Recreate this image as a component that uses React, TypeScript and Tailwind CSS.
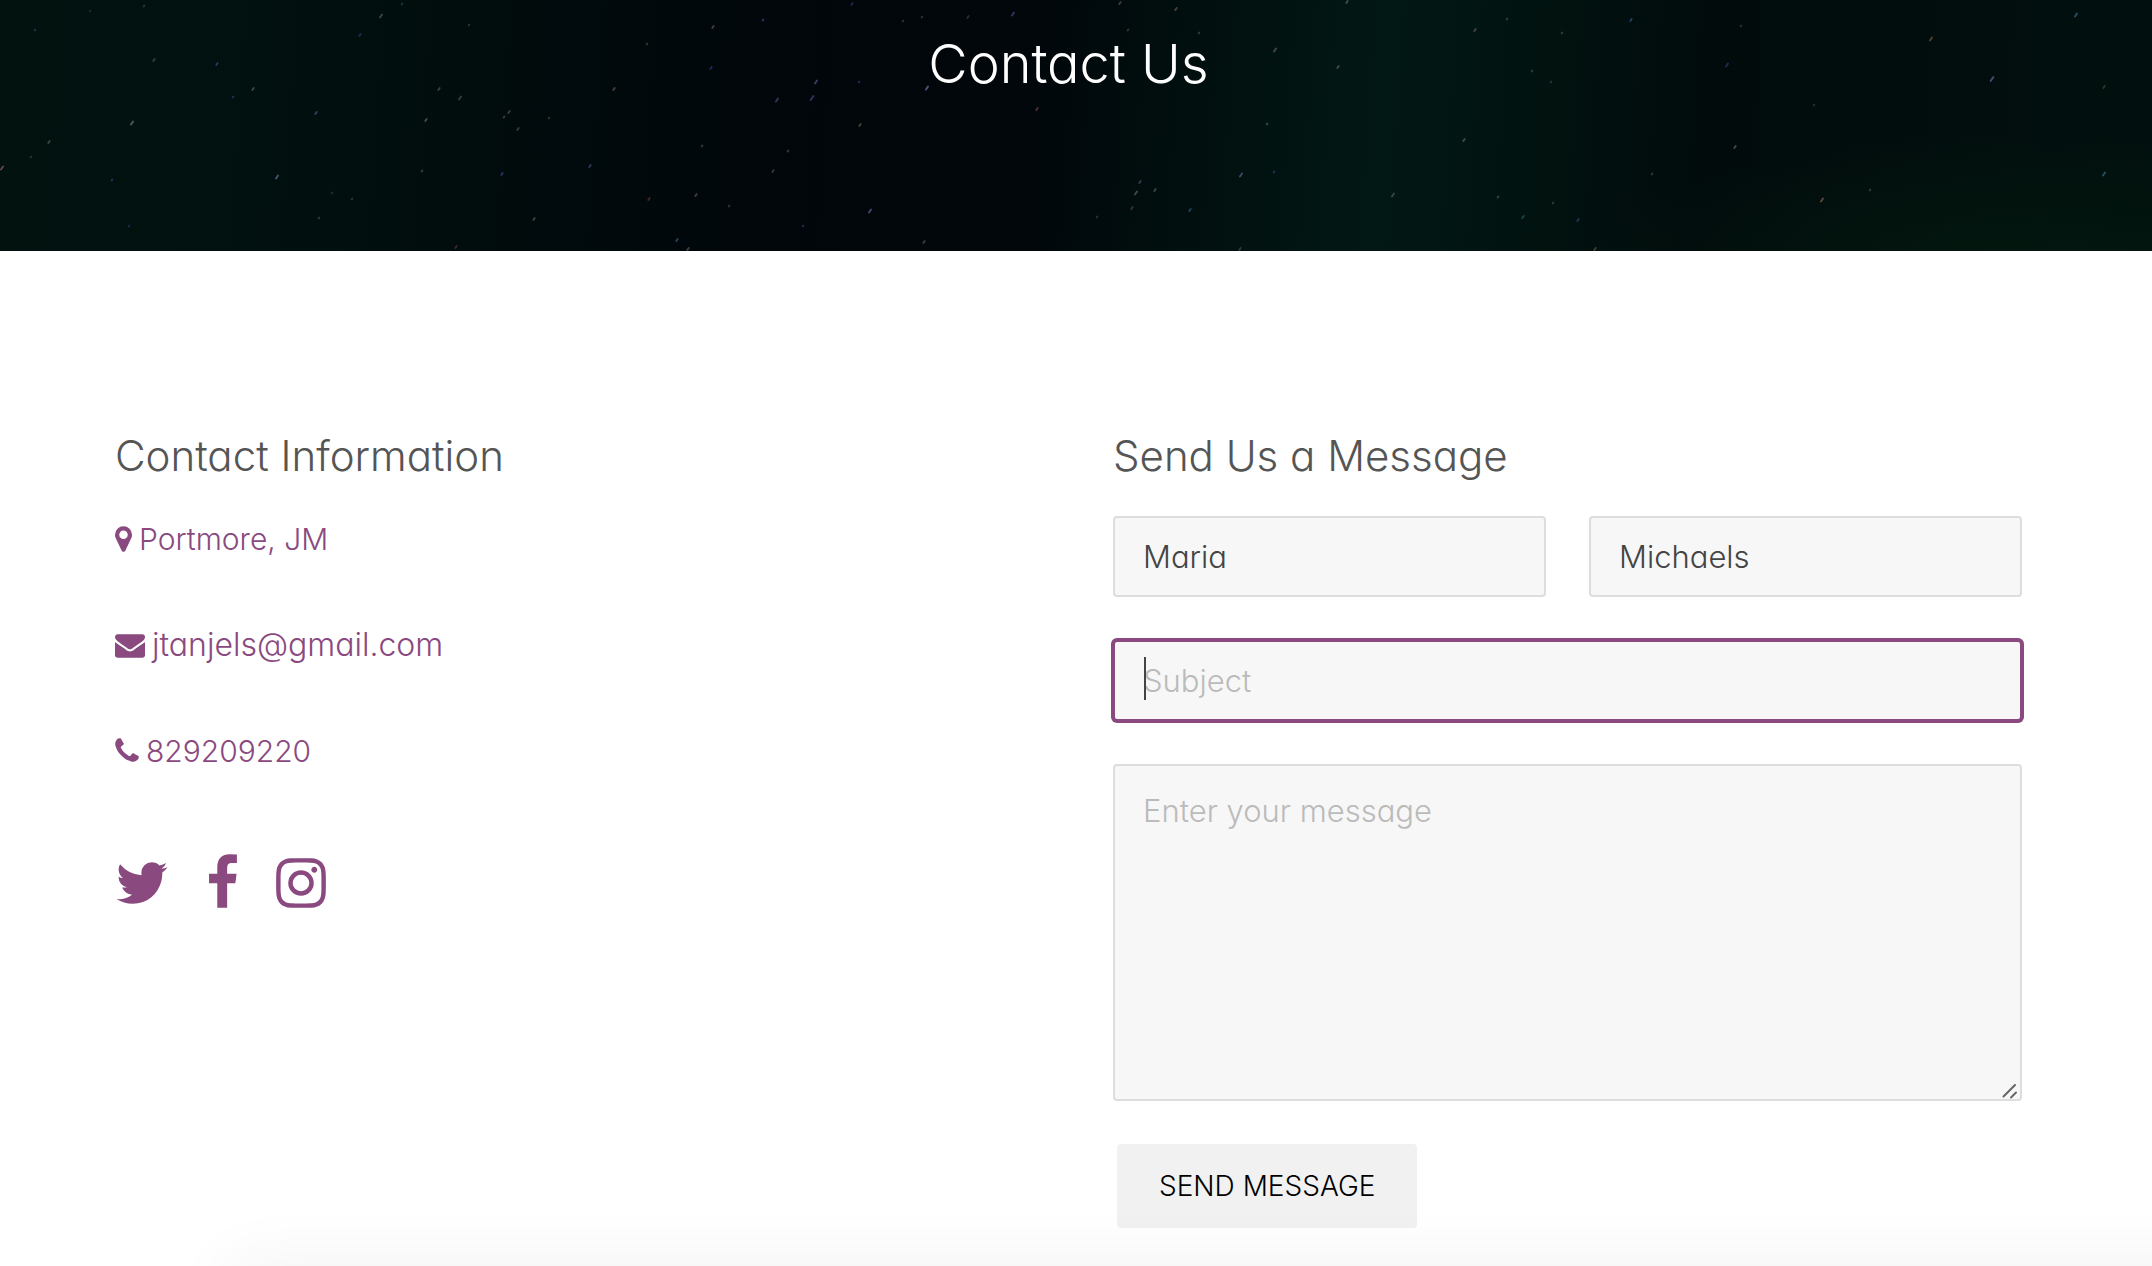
import { useState, type FormEvent } from "react";

type Star = [x: number, y: number, size: number, color: string];

const STARS: Star[] = [
  [381, 16, 3, "#5a6480"],
  [402, 4, 1, "#24506a"],
  [144, 6, 1, "#3c4a50"],
  [90, 11, 1, "#2c3a3c"],
  [35, 30, 1, "#2a4a6a"],
  [360, 35, 2, "#2c4080"],
  [469, 25, 1, "#4a4a4a"],
  [217, 64, 2, "#48509a"],
  [154, 60, 2, "#4c5c5c"],
  [253, 89, 2, "#6a6a5c"],
  [233, 97, 1, "#2e4c78"],
  [132, 123, 3, "#7a8c8c"],
  [49, 142, 2, "#5c6a62"],
  [31, 157, 1, "#3c4c44"],
  [2, 168, 3, "#a06870"],
  [277, 177, 3, "#6480b0"],
  [112, 180, 1, "#2c4c78"],
  [316, 113, 2, "#48609a"],
  [439, 89, 2, "#5a6060"],
  [460, 98, 3, "#545a5c"],
  [426, 120, 2, "#68748c"],
  [509, 112, 2, "#585870"],
  [504, 117, 1, "#5a5a5a"],
  [518, 129, 2, "#5c5c54"],
  [549, 118, 1, "#504844"],
  [614, 89, 2, "#7a6258"],
  [713, 27, 2, "#745c50"],
  [763, 20, 1, "#3a5a90"],
  [852, 4, 2, "#303c70"],
  [1013, 14, 3, "#4c5490"],
  [922, 17, 1, "#5a4840"],
  [968, 17, 2, "#444444"],
  [903, 21, 1, "#584840"],
  [647, 44, 1, "#50504c"],
  [711, 68, 2, "#303890"],
  [816, 82, 3, "#5a60a0"],
  [812, 98, 4, "#4c5090"],
  [777, 100, 3, "#50588c"],
  [859, 82, 1, "#3a4078"],
  [927, 88, 3, "#8484c8"],
  [860, 125, 2, "#746450"],
  [1037, 109, 2, "#804c48"],
  [788, 151, 1, "#545c64"],
  [773, 171, 2, "#5c5048"],
  [590, 166, 2, "#505884"],
  [502, 174, 2, "#3c50a0"],
  [422, 171, 1, "#6a5c54"],
  [649, 199, 2, "#6c3c30"],
  [696, 195, 2, "#6c5c60"],
  [534, 219, 2, "#6c6450"],
  [677, 240, 2, "#3c6a9a"],
  [688, 249, 2, "#785c50"],
  [870, 211, 3, "#6a70a8"],
  [803, 226, 1, "#3a4070"],
  [924, 242, 2, "#605c60"],
  [729, 206, 1, "#4c5050"],
  [352, 199, 1, "#504838"],
  [332, 193, 1, "#2c4460"],
  [319, 218, 1, "#3c5a58"],
  [129, 226, 1, "#2c3c68"],
  [456, 247, 2, "#5c3c34"],
  [702, 146, 1, "#4a5a54"],
  [1120, 3, 2, "#6c5850"],
  [1176, 9, 2, "#7c6450"],
  [1347, 2, 2, "#6c6c68"],
  [1128, 30, 1, "#4c5450"],
  [1199, 33, 1, "#5c4c48"],
  [1275, 50, 3, "#74685c"],
  [1338, 67, 2, "#746460"],
  [1475, 30, 2, "#6c6458"],
  [1507, 19, 1, "#4c5878"],
  [1562, 33, 1, "#4c5c5c"],
  [1631, 20, 2, "#345ca0"],
  [1741, 26, 1, "#503c58"],
  [1727, 65, 3, "#383884"],
  [1551, 82, 1, "#3c4c5c"],
  [1532, 71, 1, "#505850"],
  [1267, 124, 1, "#4c6c74"],
  [1464, 140, 2, "#6c7068"],
  [1735, 147, 2, "#6c7058"],
  [1814, 105, 1, "#4c3850"],
  [2076, 15, 3, "#4070a8"],
  [1931, 39, 3, "#8c5c4c"],
  [1992, 79, 4, "#6478b0"],
  [2104, 87, 2, "#504c40"],
  [2104, 174, 3, "#3c70a0"],
  [1822, 200, 3, "#88705c"],
  [1870, 190, 1, "#5c5044"],
  [1652, 174, 1, "#604c4c"],
  [1241, 175, 3, "#5c6ca8"],
  [1274, 172, 1, "#304c90"],
  [1140, 182, 2, "#406074"],
  [1136, 193, 3, "#706c70"],
  [1155, 190, 2, "#606864"],
  [1132, 208, 2, "#644c3c"],
  [1190, 210, 2, "#3060a0"],
  [1393, 195, 3, "#50685c"],
  [1498, 197, 1, "#606464"],
  [1523, 217, 2, "#2c6474"],
  [1578, 220, 2, "#2c5078"],
  [1553, 203, 1, "#405c58"],
  [1240, 249, 2, "#584c50"],
  [1595, 249, 2, "#6c5850"],
  [1097, 217, 1, "#584440"],
];

// Font Awesome 4 glyphs, drawn on their 1792 unit em
const ICONS = {
  marker: {
    viewBox: "384 0 1024 1792",
    path: "M1152 640q0-106-75-181t-181-75-181 75-75 181 75 181 181 75 181-75 75-181zm256 0q0 109-33 179l-364 774q-16 33-47.5 52t-67.5 19-67.5-19-46.5-52l-365-774q-33-70-33-179 0-212 150-362t362-150 362 150 150 362z",
  },
  envelope: {
    viewBox: "0 0 1792 1792",
    path: "M1792 710v794q0 66-47 113t-113 47h-1472q-66 0-113-47t-47-113v-794q44 49 101 87 362 246 497 345 57 42 92.5 65.5t94.5 48 110 24.5h2q51 0 110-24.5t94.5-48 92.5-65.5q170-123 498-345 57-39 100-87zm0-294q0 79-49 151t-122 123q-376 261-468 325-10 7-42.5 31t-54 38.8-52 32.5-57.5 27-50 9h-2q-23 0-50-9t-57.5-27-52-32.5-54-38.8-42.5-31q-91-64-262-182.5t-205-142.5q-62-42-117-115.5t-55-136.500q0-78 41.500-130t118.500-52h1472q65 0 112.500 47t47.500 113z",
  },
  phone: {
    viewBox: "192 0 1408 1792",
    path: "M1600 1240q0 27-10 70.5t-21 68.5q-21 50-122 106-94 51-186 51-27 0-52.5-3.5t-57.5-12.5-47.5-14.5-55.5-20.5-49-18q-98-35-175-83-128-79-264.5-215.5t-215.5-264.5q-48-77-83-175-3-9-18-49t-20.5-55.5-14.5-47.5-12.5-57.5-3.5-52.5q0-92 51-186 56-101 106-122 25-11 68.5-21t70.5-10q14 0 21 3 18 6 53 76 11 19 30 54t35 63.5 31 53.5q3 4 17.5 25t21.5 35.5 7 28.5q0 20-28.5 50t-62 55-62 53-28.5 46q0 9 5 22.5t8.5 20.5 14 24 11.5 19q76 137 174 235t235 174q2 1 19 11.5t24 14 20.5 8.5 22.5 5q18 0 46-28.5t53-62 55-62 50-28.5q14 0 28.5 7t35.5 21.5 25 17.5q25 15 53.5 31t63.5 35 54 30q70 35 76 53 3 7 3 21z",
  },
  twitter: {
    viewBox: "64 0 1664 1792",
    path: "M1684 408q-67 98-162 167 1 14 1 42 0 130-38 259.5t-115.5 248.5-184.5 210.5-258 146-323 54.5q-271 0-496-145 35 4 78 4 225 0 401-138-105-2-188-64.5t-114-159.5q33 5 61 5 43 0 85-11-112-23-185.5-111.5t-73.5-205.5v-4q68 38 146 41-66-44-105-115t-39-154q0-88 44-163 121 149 294.5 238.5t371.5 99.5q-8-38-8-74 0-134 94.5-228.5t228.5-94.5q140 0 236 102 109-21 205-78-37 115-142 178 93-10 186-50z",
  },
  facebook: {
    viewBox: "384 0 1024 1792",
    path: "M1343 12v264h-157q-86 0-116 36t-30 108v189h293l-39 296h-254v759h-306v-759h-255v-296h255v-218q0-186 104-288.5t277-102.5q147 0 228 12z",
  },
  instagram: {
    viewBox: "128 0 1536 1792",
    path: "M1152 896q0-106-75-181t-181-75-181 75-75 181 75 181 181 75 181-75 75-181zm138 0q0 164-115 279t-279 115-279-115-115-279 115-279 279-115 279 115 115 279zm108-410q0 38-27 65t-65 27-65-27-27-65 27-65 65-27 65 27 27 65zm-502-220q-7 0-76.5-.5t-105.5 0-96.5 3-103 10-71.5 18.5q-50 20-88 58t-58 88q-11 29-18.5 71.5t-10 103-3 96.5 0 105.5.5 76.5-.5 76.5 0 105.5 3 96.5 10 103 18.5 71.5q20 50 58 88t88 58q29 11 71.5 18.5t103 10 96.5 3 105.5 0 76.5-.5 76.5.5 105.5 0 96.5-3 103-10 71.5-18.5q50-20 88-58t58-88q11-29 18.5-71.5t10-103 3-96.5 0-105.5-.5-76.5.5-76.5 0-105.5-3-96.5-10-103-18.5-71.5q-20-50-58-88t-88-58q-29-11-71.5-18.5t-103-10-96.5-3-105.5 0-76.5.5zm768 630q0 229-5 317-10 208-124 322t-322 124q-88 5-317 5t-317-5q-208-10-322-124t-124-322q-5-88-5-317t5-317q10-208 124-322t322-124q88-5 317-5t317 5q208 10 322 124t124 322q5 88 5 317z",
  },
};

interface IconProps {
  name: keyof typeof ICONS;
  className: string;
}

const Icon = ({ name, className }: IconProps) => (
  <svg viewBox={ICONS[name].viewBox} className={className} fill="currentColor" aria-hidden="true">
    <path d={ICONS[name].path} />
  </svg>
);

const Hero = () => (
  <header className="relative h-[251px] overflow-hidden bg-[#010a0d] bg-[radial-gradient(ellipse_420px_130px_at_93%_105%,#041a0fcc,transparent),linear-gradient(94deg,#01120f_0%,#01110f_12%,#010a0c_27%,#01060a_38%,#01070b_48%,#01100f_56%,#021815_64%,#01120f_72%,#010b0c_79%,#01100e_100%)] pr-[130px] pl-[115px] pt-[34px]">
    <svg
      viewBox="0 0 2152 251"
      preserveAspectRatio="xMidYMid slice"
      className="absolute inset-0 h-full w-full opacity-60"
      aria-hidden="true"
    >
      {STARS.map(([x, y, size, color]) => (
        <line
          key={`${x}-${y}`}
          x1={x - size / 3}
          y1={y + size / 2}
          x2={x + size / 3}
          y2={y - size / 2}
          stroke={color}
          strokeWidth={2}
          strokeLinecap="round"
        />
      ))}
    </svg>
    <h1 className="relative text-center text-[54px] leading-[60px] text-white">Contact Us</h1>
  </header>
);

const ContactInfo = () => (
  <section className="text-[#8a497f]">
    <h2 className="text-[42px] leading-[50px] text-[#555]">Contact Information</h2>
    <ul className="mt-[35px] flex flex-col items-start gap-[60px] text-[30px] leading-[46px]">
      <li>
        <a href="#map" className="flex items-center gap-[7px]">
          <Icon name="marker" className="h-[30px] w-[17px]" />
          Portmore, JM
        </a>
      </li>
      <li>
        <a href="mailto:jtanjels@gmail.com" className="flex items-center gap-[7px]">
          <Icon name="envelope" className="h-[30px] w-[30px]" />
          <span className="text-[32px]">jtanjels@gmail.com</span>
        </a>
      </li>
      <li>
        <a href="tel:829209220" className="flex items-center gap-[7px]">
          <Icon name="phone" className="h-[30px] w-[24px]" />
          829209220
        </a>
      </li>
    </ul>
    <div className="mt-20 flex gap-[37px]">
      <a href="#twitter" aria-label="Twitter">
        <Icon name="twitter" className="h-[58px] w-[54px]" />
      </a>
      <a href="#facebook" aria-label="Facebook">
        <Icon name="facebook" className="h-[58px] w-[33px]" />
      </a>
      <a href="#instagram" aria-label="Instagram">
        <Icon name="instagram" className="h-[58px] w-[50px]" />
      </a>
    </div>
  </section>
);

const fieldClasses =
  "w-full min-w-0 rounded border-2 bg-[#f7f7f7] px-[28px] text-[31px] leading-[46px] text-[#444] placeholder:text-[#bbb] outline-none";

const MessageForm = () => {
  const [firstName, setFirstName] = useState("Maria");
  const [lastName, setLastName] = useState("Michaels");
  const [subject, setSubject] = useState("");
  const [message, setMessage] = useState("");

  const handleSubmit = (event: FormEvent) => {
    event.preventDefault();
  };

  return (
    <section>
      <h2 className="text-[42px] leading-[50px] text-[#555]">Send Us a Message</h2>
      <form onSubmit={handleSubmit} className="mt-[35px] flex flex-col gap-[43px]">
        <div className="grid grid-cols-2 gap-[43px]">
          <input
            aria-label="First name"
            value={firstName}
            onChange={(event) => setFirstName(event.target.value)}
            className={`${fieldClasses} h-[81px] border-[#ddd]`}
          />
          <input
            aria-label="Last name"
            value={lastName}
            onChange={(event) => setLastName(event.target.value)}
            className={`${fieldClasses} h-[81px] border-[#ddd]`}
          />
        </div>
        <div className="relative">
          <input
            aria-label="Subject"
            placeholder="Subject"
            value={subject}
            onChange={(event) => setSubject(event.target.value)}
            className={`${fieldClasses} block h-[81px] border-[#8a497f] ring-2 ring-[#8a497f]`}
          />
          {/* text cursor of the active field */}
          {!subject && (
            <span className="pointer-events-none absolute top-[17px] left-[31px] h-[43px] w-[2px] bg-[#444]" />
          )}
        </div>
        <div className="relative">
          <textarea
            aria-label="Message"
            placeholder="Enter your message"
            value={message}
            onChange={(event) => setMessage(event.target.value)}
            className={`${fieldClasses} block h-[337px] border-[#ddd] py-[22px] [&::-webkit-resizer]:bg-transparent`}
          />
          <svg
            viewBox="0 0 20 20"
            className="pointer-events-none absolute right-0.5 bottom-0.5 size-5"
            stroke="#666"
            strokeWidth={2}
            strokeLinecap="round"
            aria-hidden="true"
          >
            <path d="M3.500 17.500 15 6M11 18.500l5-5" />
          </svg>
        </div>
        <button
          type="submit"
          className="ml-1 h-[84px] self-start rounded bg-[#f1f1f1] px-[42px] text-[28px] text-black"
        >
          SEND MESSAGE
        </button>
      </form>
    </section>
  );
};

export default function App() {
  return (
    <div className="min-h-screen overflow-hidden bg-white font-['Inter',sans-serif] font-[340] [font-feature-settings:'cv11']">
      <Hero />
      <main className="grid grid-cols-2 gap-[89px] pt-[180px] pr-[130px] pb-9 pl-[115px]">
        <ContactInfo />
        <MessageForm />
      </main>
      <div className="pointer-events-none fixed top-full -right-20 left-[230px] h-20 shadow-[0_0_70px_rgba(0,0,0,0.06)]" />
    </div>
  );
}
